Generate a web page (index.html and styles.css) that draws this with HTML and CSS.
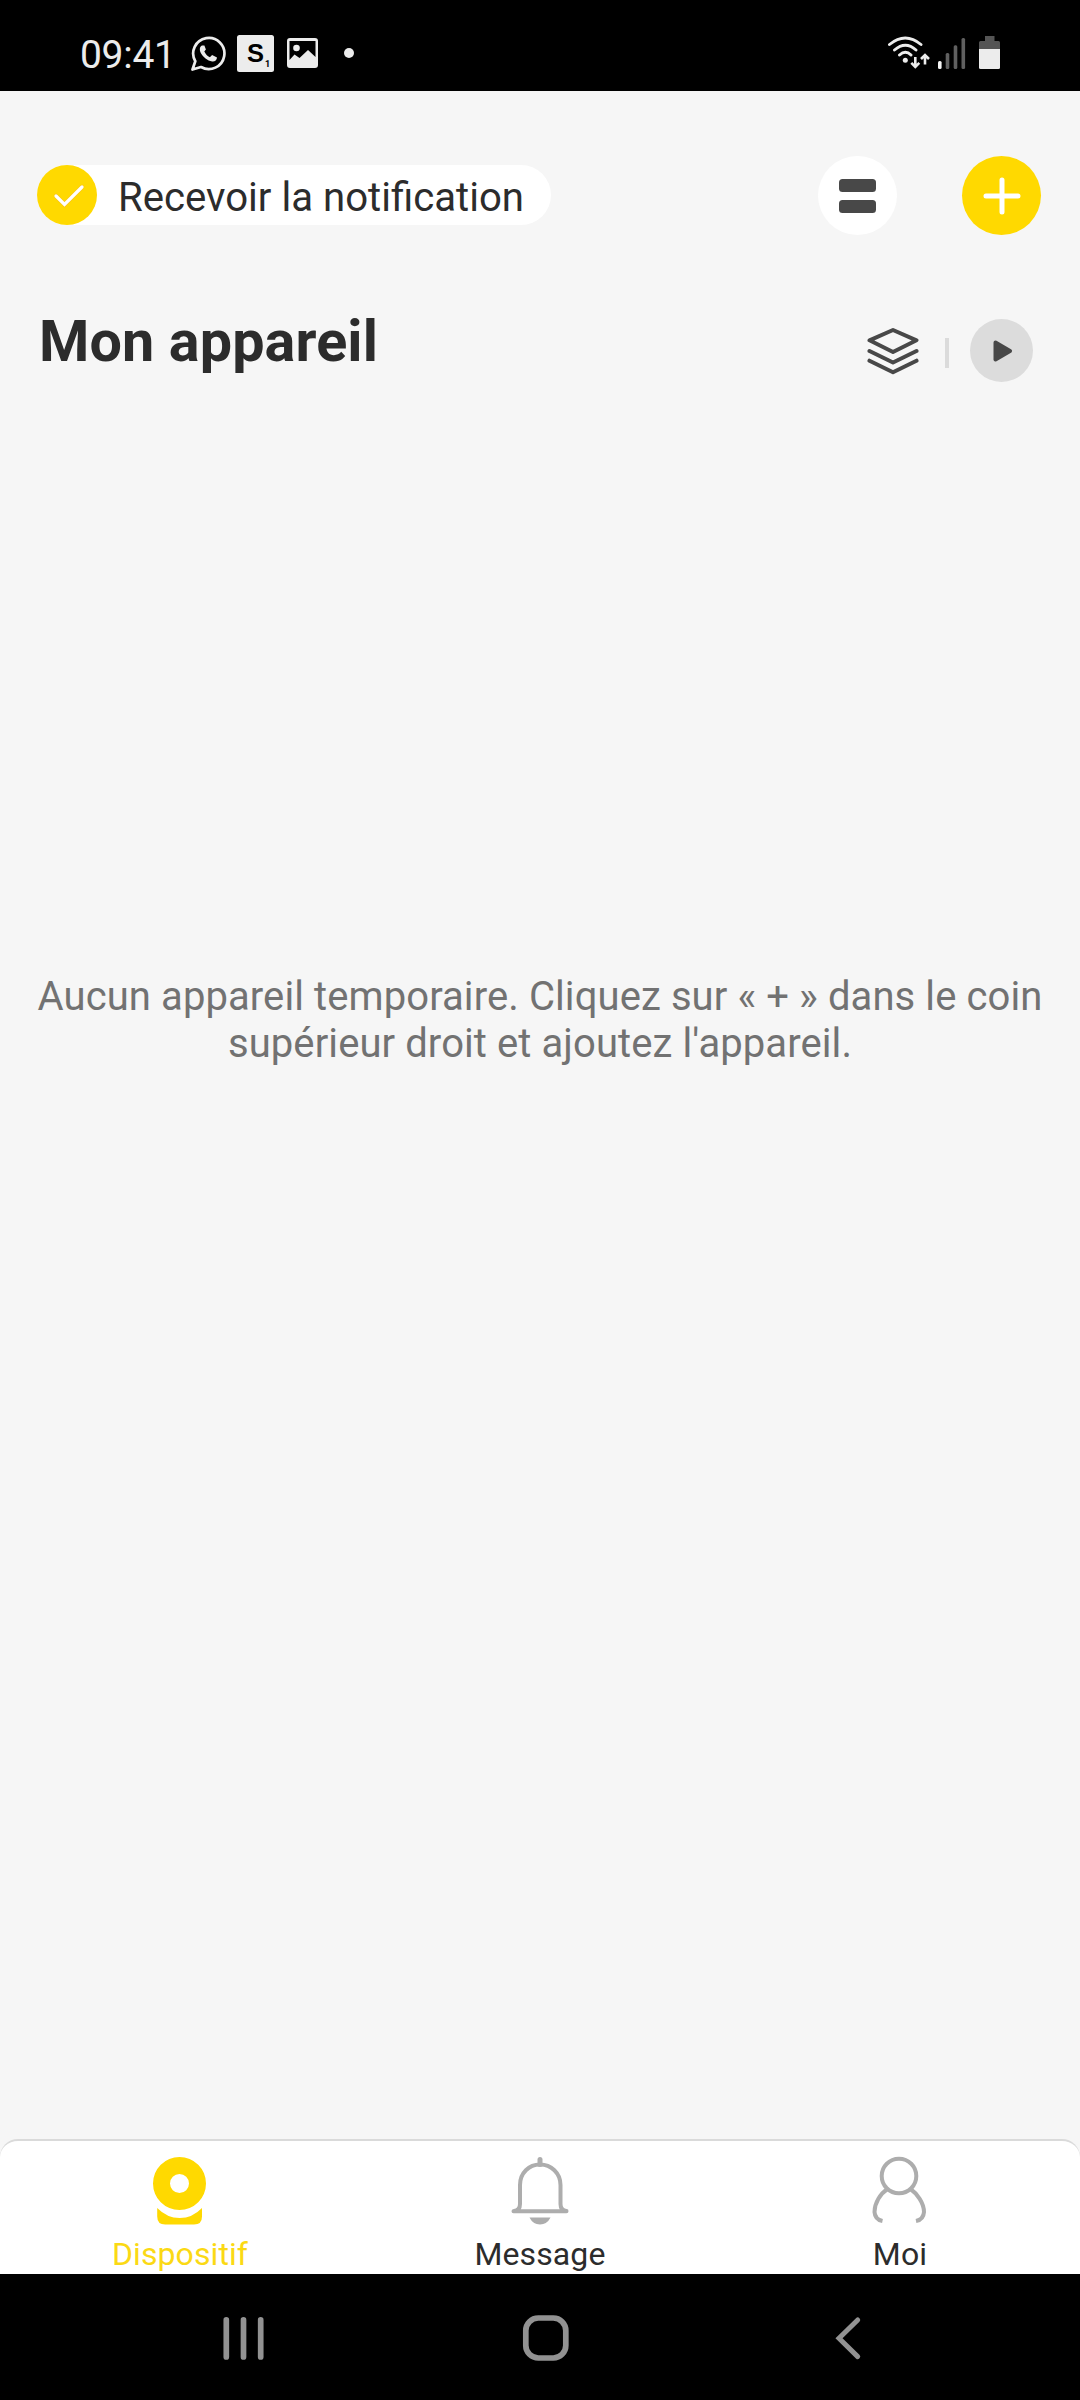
FILE: index.html
```html
<!DOCTYPE html>
<html lang="fr">
<head>
<meta charset="utf-8">
<title>Mon appareil</title>
<link rel="stylesheet" href="styles.css">
</head>
<body>
<header class="status">
  <span class="clock">09:41</span>
  <svg class="status-left" width="170" height="40" viewBox="190 34 170 40">
    <path d="M192.500 69.500l2.800-8.200a15.600 15.600 0 1 1 5.700 5.700z" fill="none" stroke="#ececec" stroke-width="2.700" stroke-linejoin="round"/>
    <path d="M202 45.500c-2.500 1.200-2.700 4.500-1.200 7.400 2.400 4.300 6.600 7.600 11.300 8.600 2.400.5 4.900-1.500 4.900-4l-4.900-2.400-2.200 2.200c-2.600-1.300-4.300-3-5.600-5.700l1.600-2.100-1.500-4z" fill="#ececec"/>
    <rect x="237" y="35" width="37" height="37" rx="2.500" fill="#ececec"/>
    <text class="badge-letter" x="247" y="62">S</text>
    <text class="badge-digit" x="265" y="67">1</text>
    <path fill-rule="evenodd" fill="#ececec" d="M290 38h25a3 3 0 0 1 3 3v24a3 3 0 0 1-3 3h-25a3 3 0 0 1-3-3V41a3 3 0 0 1 3-3zM289.500 41v19l5-5.500 5 3.500 8.500-8 7.500 7V41z"/>
    <circle cx="296.500" cy="48" r="3.300" fill="#ececec"/>
    <circle cx="349" cy="53" r="5" fill="#ececec"/>
  </svg>
  <svg class="status-right" width="116" height="36" viewBox="886 34 116 36">
    <g fill="none" stroke="#ececec" stroke-width="2.900" stroke-linecap="round">
      <path d="M889.500 44.500q15.800-13 31.500 0M894.500 50q11-9.500 21.500 0M899.500 55q6-5.500 11.500 0"/>
    </g>
    <circle cx="905.300" cy="60.300" r="2.500" fill="#ececec"/>
    <path d="M915.300 57v8.500M911.300 62.800l4 4 4-4M925 64.500V56M921 59l4-4 4 4" fill="none" stroke="#ececec" stroke-width="2.600"/>
    <rect x="938" y="61" width="3.600" height="8" rx="1.500" fill="#f4f4f4"/>
    <g fill="#606060"><rect x="945.700" y="53" width="3.600" height="16" rx="1.500"/><rect x="953.700" y="45.300" width="3.600" height="23.700" rx="1.500"/><rect x="961.500" y="38" width="3.600" height="31" rx="1.500"/></g>
    <path d="M979 50v-7.500a1.500 1.500 0 0 1 1.500-1.500h4.500v-5h9.500v5h4a1.500 1.500 0 0 1 1.500 1.500V50z" fill="#555"/>
    <path d="M979 49h21v18.500a1.500 1.500 0 0 1-1.500 1.500h-18a1.500 1.500 0 0 1-1.500-1.500z" fill="#ececec"/>
  </svg>
</header>
<main class="screen">
  <div class="topbar">
    <div class="notify">
      <svg width="60" height="60" viewBox="0 0 60 60"><circle cx="30" cy="30" r="30" fill="#ffd900"/><path d="M19 31l8.500 8.500L45 22" fill="none" stroke="#f0a030" stroke-opacity=".5" stroke-width="4.200" stroke-linecap="round"/><path d="M19 31l8.500 8.500L45 22" fill="none" stroke="#fff" stroke-width="3.300" stroke-linecap="round"/></svg>
      <span class="notify-text">Recevoir la notification</span>
    </div>
    <div class="actions">
      <button class="round white" aria-label="Affichage"><svg width="37" height="34" viewBox="0 0 37 34" fill="#484848"><rect width="37" height="13" rx="3.500"/><rect y="21" width="37" height="13" rx="3.500"/></svg></button>
      <button class="round yellow" aria-label="Ajouter"><svg width="38" height="38" viewBox="0 0 38 38"><path d="M3 19h32M19 3v32" stroke="#fff" stroke-width="5" stroke-linecap="round"/></svg></button>
    </div>
  </div>
  <div class="heading">
    <h1>Mon appareil</h1>
    <div class="tools">
      <svg width="52" height="48" viewBox="0 0 52 48" fill="none" stroke="#484848" stroke-width="4" stroke-linecap="round" stroke-linejoin="round"><path d="M26 3L49.500 13.300 26 25 2.500 13.300z"/><path d="M2.500 24L26 35.500 49.500 24M2.500 33.700L26 45.300 49.500 33.700"/></svg>
      <i class="divider"></i>
      <button class="play" aria-label="Lecture"><svg width="20" height="22" viewBox="0 0 20 22"><path d="M2.500 2.500L17 11 2.500 19.500z" fill="#484848" stroke="#484848" stroke-width="4" stroke-linejoin="round"/></svg></button>
    </div>
  </div>
  <p class="empty">Aucun appareil temporaire. Cliquez sur « + » dans le coin<br>supérieur droit et ajoutez l'appareil.</p>
</main>
<nav class="tabs">
  <a class="tab active"><svg width="54" height="69" viewBox="0 0 54 69" fill="#ffd900"><path fill-rule="evenodd" d="M26.500 1a26.500 26.500 0 1 1 0 53 26.500 26.500 0 0 1 0-53zM26.500 18a9.500 9.500 0 1 0 0 19 9.500 9.500 0 0 0 0-19z"/><path d="M4.200 52Q14 62 26.700 62T49 52v8.500q0 8-8 8H12.200q-8 0-8-8z"/></svg><span>Dispositif</span></a>
  <a class="tab"><svg width="58" height="69" viewBox="0 0 58 69"><path d="M2.500 55.200h53M3 55q6-.500 6-7V29C9 17 18 8.500 29 8.500S49.500 17 49.500 29v19q0 6.500 6 7" fill="none" stroke="#adadad" stroke-width="4" stroke-linecap="round"/><path d="M29 3.500v5" stroke="#adadad" stroke-width="5" stroke-linecap="round"/><path d="M18.500 61.500h21Q36 68.500 29 68.500t-10.500-7z" fill="#adadad"/></svg><span>Message</span></a>
  <a class="tab"><svg width="56" height="69" viewBox="0 0 56 69" fill="none" stroke="#adadad" stroke-width="4"><circle cx="27" cy="20" r="17.300"/><path d="M15.500 33C8.500 37.500 2.500 47 2.500 56q.500 7.500 8 9M38.500 33c6.500 4.500 13.500 14 13.500 23q-.500 7.500-8 9"/></svg><span>Moi</span></a>
</nav>
<footer class="sysnav">
  <svg width="44" height="46" viewBox="0 0 44 46" stroke="#929292" stroke-width="5.700" stroke-linecap="round"><path d="M5.300 4.900v37M22.500 4.900v37M39.700 4.900v37"/></svg>
  <svg class="home" width="48" height="48" viewBox="0 0 48 48"><rect x="3.800" y="4" width="40" height="40" rx="12.500" fill="none" stroke="#929292" stroke-width="5.700"/></svg>
  <svg class="back" width="28" height="46" viewBox="0 0 28 46"><path d="M23.700 5L5 23.300 23.700 41.600" fill="none" stroke="#929292" stroke-width="5" stroke-linecap="round"/></svg>
</footer>
</body>
</html>
```
FILE: styles.css
```css
* { box-sizing: border-box; }
body { margin: 0; width: 1080px; height: 2400px; display: flex; flex-direction: column; background: #f6f6f6; color: #2c2c2c; font-family: Roboto, sans-serif; }
svg { display: block; flex: none; }
button { border: 0; padding: 0; display: grid; place-items: center; border-radius: 50%; }
.status { height: 91px; background: #000; display: flex; align-items: flex-start; padding: 34px 78px 0 80px; }
.clock { width: 110px; padding-top: 1px; color: #ececec; font-size: 39px; line-height: 40px; letter-spacing: -0.3px; }
.status-right { margin-left: auto; }
.badge-letter { font: 700 25.5px "Liberation Sans", sans-serif; }
.badge-digit { font: 700 9px Roboto, sans-serif; }
.screen { flex: 1; }
.topbar { display: flex; justify-content: space-between; align-items: flex-start; padding: 65px 39px 0 37px; height: 144px; }
.notify { width: 514px; height: 60px; margin-top: 9px; border-radius: 30px; background: #fff; display: flex; align-items: center; gap: 21px; }
.notify-text { font-size: 40.15px; line-height: 47px; padding-top: 5px; white-space: nowrap; }
.actions { display: flex; gap: 65px; }
.round { width: 79px; height: 79px; }
.white { background: #fff; }
.yellow { background: #ffd900; }
.heading { height: 150px; padding: 71px 47px 0 39px; display: flex; justify-content: space-between; }
h1 { margin: 2px 0 0; font-size: 57.5px; line-height: 67px; font-weight: 700; letter-spacing: 0.12px; white-space: nowrap; }
.tools { display: flex; align-items: center; height: 63px; margin-top: 13px; }
.divider { width: 4px; height: 30px; background: #dbdbdb; margin: 5px 21px 0 26px; }
.play { width: 63px; height: 63px; padding-left: 3px; background: #dcdcdc; }
.empty { margin: 588px 0 0; text-align: center; font-size: 40px; line-height: 47px; letter-spacing: 0.09px; color: #727272; white-space: nowrap; }
.tabs { height: 135px; background: #fff; border-top: 2px solid #dadada; border-radius: 18px 18px 0 0; display: grid; grid-template-columns: repeat(3, 1fr); }
.tab { display: flex; flex-direction: column; align-items: center; padding: 15px 0 0; font-size: 32px; }
.tab span { line-height: 38px; margin-top: 10px; letter-spacing: 0.1px; }
.active { color: #fbd914; }
.sysnav { height: 126px; background: #000; display: flex; align-items: center; padding: 2px 0 0 221px; }
.home { margin-left: 257px; }
.back { margin-left: 264px; }
```
